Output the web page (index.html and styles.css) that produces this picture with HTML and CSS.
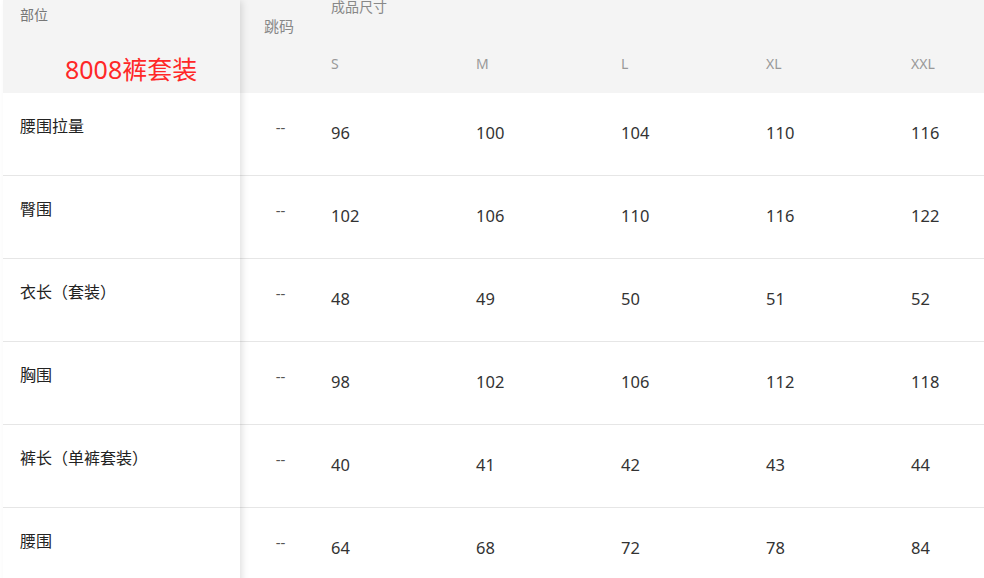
FILE: index.html
```html
<!DOCTYPE html>
<html lang="zh-CN">
<head>
<meta charset="utf-8">
<title>尺码表</title>
<link rel="stylesheet" href="styles.css">
</head>
<body>
<div class="sheet">
  <div class="fixed-col">
    <div class="head-fixed">
      <div class="h-label">部位</div>
      <div class="h-title">8008裤套装</div>
    </div>
    <div class="row label">腰围拉量</div>
    <div class="row label">臀围</div>
    <div class="row label">衣长（套装）</div>
    <div class="row label">胸围</div>
    <div class="row label">裤长（单裤套装）</div>
    <div class="row label">腰围</div>
  </div>
  <div class="scroll">
    <div class="head">
      <div class="h-jump">跳码</div>
      <div class="h-sizes">
        <div class="h-group">成品尺寸</div>
        <div class="size-names">
          <span>S</span><span>M</span><span>L</span><span>XL</span><span>XXL</span>
        </div>
      </div>
    </div>
    <div class="row grid"><span class="jump">--</span><span>96</span><span>100</span><span>104</span><span>110</span><span>116</span></div>
    <div class="row grid"><span class="jump">--</span><span>102</span><span>106</span><span>110</span><span>116</span><span>122</span></div>
    <div class="row grid"><span class="jump">--</span><span>48</span><span>49</span><span>50</span><span>51</span><span>52</span></div>
    <div class="row grid"><span class="jump">--</span><span>98</span><span>102</span><span>106</span><span>112</span><span>118</span></div>
    <div class="row grid"><span class="jump">--</span><span>40</span><span>41</span><span>42</span><span>43</span><span>44</span></div>
    <div class="row grid"><span class="jump">--</span><span>64</span><span>68</span><span>72</span><span>78</span><span>84</span></div>
  </div>
</div>
</body>
</html>
```

FILE: styles.css
```css
html, body {
  margin: 0;
  padding: 0;
  background: #fff;
  overflow: hidden;
}

body {
  font-family: "Noto Sans", "Noto Sans CJK SC", sans-serif;
  color: #333;
}

.sheet {
  display: flex;
  padding-left: 3px;
  width: 1100px;
}

.fixed-col {
  width: 237px;
  flex: none;
  position: relative;
  z-index: 2;
  background: #fff;
  box-shadow: 3px 0 7px -1px rgba(0, 0, 0, 0.13);
}

.head-fixed {
  height: 93px;
  background: #f4f4f4;
  display: flex;
  flex-direction: column;
}

.h-label {
  padding: 4px 0 0 17px;
  font-size: 14px;
  line-height: 20px;
  color: #777;
  font-family: "Noto Sans CJK SC", sans-serif;
}

.h-title {
  padding: 30px 0 0 62px;
  font-size: 25px;
  line-height: 30px;
  color: #ff2727;
  font-family: "Noto Sans", "Noto Sans CJK SC", sans-serif;
}

.row {
  box-sizing: border-box;
  height: 83px;
  border-bottom: 1px solid #e6e6e6;
}

.label {
  padding: 21px 0 0 17px;
  font-size: 16px;
  line-height: 22px;
  color: #222;
  font-family: "Noto Sans CJK SC", sans-serif;
}

.scroll {
  flex: 1;
}

.head {
  height: 93px;
  background: #f4f4f4;
  display: flex;
}

.h-jump {
  width: 78px;
  flex: none;
  text-align: center;
  padding-top: 15px;
  font-size: 15px;
  line-height: 22px;
  color: #888;
  font-family: "Noto Sans CJK SC", sans-serif;
}

.h-sizes {
  flex: 1;
  display: flex;
  flex-direction: column;
}

.h-group {
  margin-top: -5px;
  padding-left: 13px;
  font-size: 14px;
  line-height: 22px;
  color: #888;
  font-family: "Noto Sans CJK SC", sans-serif;
}

.size-names {
  display: grid;
  grid-template-columns: repeat(5, 145px);
  padding-top: 38px;
  font-size: 14px;
  line-height: 18px;
  color: #999;
}

.size-names span {
  padding-left: 13px;
}

.grid {
  display: grid;
  grid-template-columns: 78px repeat(5, 145px);
  align-items: start;
  font-size: 16.5px;
  line-height: 22px;
  color: #333;
}

.grid span {
  padding: 29px 0 0 13px;
}

.grid .jump {
  padding: 23px 0 0 3px;
  text-align: center;
  font-size: 15px;
  color: #555;
}
```
